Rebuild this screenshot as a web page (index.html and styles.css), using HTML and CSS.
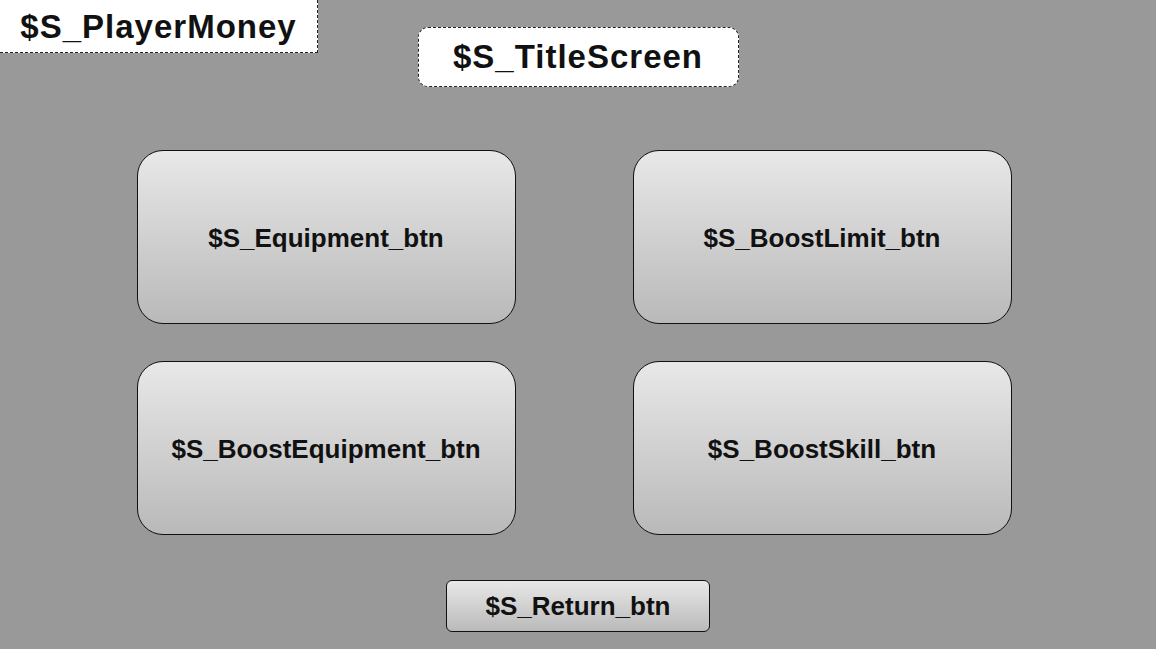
FILE: index.html
```html
<!doctype html>
<html lang="en">
<head>
	<meta charset="UTF-8">
	<title>Shop</title>
	<link rel="stylesheet" href="styles.css">
</head>
<body>
<div class="money">$S_PlayerMoney</div>
<div class="main">
	<div class="title">$S_TitleScreen</div>
	<div class="grid">
		<div class="btn">$S_Equipment_btn</div>
		<div class="btn">$S_BoostLimit_btn</div>
		<div class="btn">$S_BoostEquipment_btn</div>
		<div class="btn">$S_BoostSkill_btn</div>
	</div>
	<div class="return">$S_Return_btn</div>
</div>
</body>
</html>
```

FILE: styles.css
```css
html, body
{
	margin: 0;
	padding: 0;
	background-color: #999999;
	font-family: "Liberation Sans", Arial, sans-serif;
	font-weight: bold;
	color: #111111;
}

.money
{
	position: absolute;
	left: 0;
	top: 0;
	width: 317px;
	height: 52px;
	background-color: #FFFFFF;
	border-right: 1px dashed #222222;
	border-bottom: 1px dashed #222222;
	font-size: 33px;
	letter-spacing: 1px;
	line-height: 54px;
	text-align: center;
}

.main
{
	display: flex;
	flex-direction: column;
	align-items: center;
	width: 1156px;
	height: 649px;
}

.title
{
	margin-top: 27px;
	width: 319px;
	height: 58px;
	background-color: #FFFFFF;
	border: 1px dashed #222222;
	border-radius: 10px;
	font-size: 33px;
	letter-spacing: 1px;
	line-height: 58px;
	text-align: center;
}

.grid
{
	margin-top: 63px;
	margin-right: 8px;
	display: grid;
	grid-template-columns: 379px 379px;
	grid-auto-rows: 174px;
	column-gap: 117px;
	row-gap: 37px;
}

.btn
{
	display: flex;
	align-items: center;
	justify-content: center;
	padding-top: 3px;
	box-sizing: border-box;
	border: 1px solid #111111;
	border-radius: 26px;
	background: linear-gradient(#e8e8e8, #b9b9b9);
	font-size: 26px;
}

.return
{
	margin-top: 45px;
	width: 262px;
	height: 50px;
	display: flex;
	align-items: center;
	justify-content: center;
	border: 1px solid #111111;
	border-radius: 6px;
	background: linear-gradient(#e8e8e8, #bababa);
	font-size: 26px;
}
```
